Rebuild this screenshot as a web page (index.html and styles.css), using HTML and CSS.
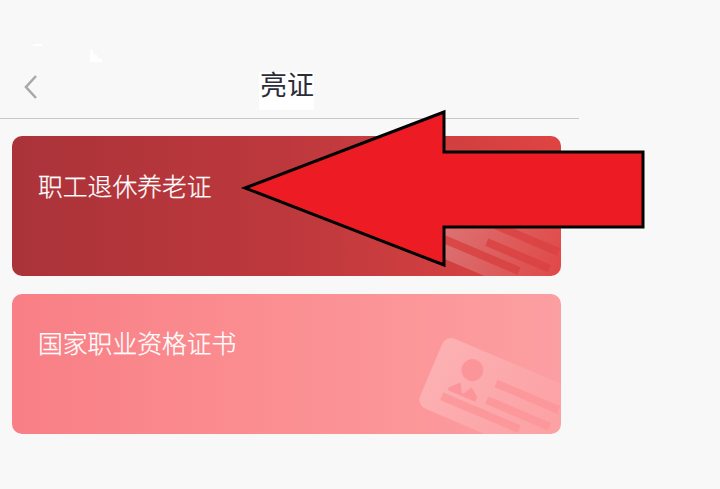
FILE: index.html
```html
<!DOCTYPE html>
<html lang="zh">
<head>
<meta charset="utf-8">
<title>亮证</title>
<link rel="stylesheet" href="styles.css">
</head>
<body>
<div class="screen">
  <i class="patch patch-a"></i>
  <i class="patch patch-b"></i>
  <i class="patch patch-c"></i>
  <header class="topbar">
    <svg class="back" viewBox="0 0 16 24" width="16" height="24"><path d="M13 1 3 12 13 23" fill="none" stroke="#a9a9a9" stroke-width="2.6"/></svg>
    <h1 class="title">亮证</h1>
  </header>
  <main class="cards">
    <section class="card card-red">
      <span class="card-label">职工退休养老证</span>
      <svg class="card-art" viewBox="0 0 549 140" width="549" height="140">
        <defs>
          <linearGradient id="plateRed" x1="0" x2="1" y1="0" y2="0"><stop offset="0" stop-color="#fff" stop-opacity=".3"/><stop offset=".8" stop-color="#fff" stop-opacity=".04"/></linearGradient>
        </defs>
        <g transform="translate(434 41) rotate(23)">
          <rect width="170" height="76" rx="10" fill="url(#plateRed)"/>
          <circle cx="38" cy="22" r="11" fill="#d44144"/>
          <rect x="65" y="21" width="68" height="8" fill="#da4242" fill-opacity=".85"/>
          <rect x="63" y="40" width="68" height="8" fill="#da4242" fill-opacity=".85"/>
          <rect x="20" y="54" width="84" height="8" fill="#d84141" fill-opacity=".85"/>
        </g>
      </svg>
    </section>
    <section class="card card-pink">
      <span class="card-label">国家职业资格证书</span>
      <svg class="card-art" viewBox="0 0 549 140" width="549" height="140">
        <defs>
          <linearGradient id="platePink" x1="0" x2="1" y1="0" y2="0"><stop offset="0" stop-color="#fff" stop-opacity=".24"/><stop offset=".85" stop-color="#fff" stop-opacity=".02"/></linearGradient>
        </defs>
        <g transform="translate(434 41) rotate(23)">
          <rect width="170" height="76" rx="10" fill="url(#platePink)"/>
          <circle cx="38" cy="22" r="11" fill="#fc9599"/>
          <path d="M23 47 32 38 37 47 39 47 44 38 53 45 53 50 23 50Z" fill="#fc9599"/>
          <rect x="65" y="21" width="68" height="8" fill="#fc9599" fill-opacity=".85"/>
          <rect x="63" y="40" width="68" height="8" fill="#fc9599" fill-opacity=".85"/>
          <rect x="20" y="54" width="84" height="8" fill="#fc9599" fill-opacity=".85"/>
        </g>
      </svg>
    </section>
  </main>
  <svg class="arrow" viewBox="0 0 720 489" width="720" height="489"><path d="M245 188 444 112V152H643V227H444V265Z" fill="#ed1c24" stroke="#000" stroke-width="3"/></svg>
</div>
</body>
</html>
```
FILE: styles.css
```css
* { box-sizing: border-box; }
html, body { margin: 0; padding: 0; }
body {
  background: #f8f8f8;
  font-family: "Noto Sans CJK SC", "Noto Sans", sans-serif;
  overflow: hidden;
}
.screen { position: relative; width: 720px; height: 489px; }
.topbar {
  position: relative;
  width: 579px;
  height: 119px;
  border-bottom: 1px solid #c8c8c8;
  display: flex;
  align-items: flex-end;
  justify-content: center;
  padding-bottom: 16px;
}
.back { position: absolute; left: 23px; top: 75px; }
.title {
  margin: 0 5px 0 0;
  font-size: 27px;
  line-height: 36px;
  font-weight: 400;
  color: #2b2e38;
}
.cards {
  width: 579px;
  padding: 17px 18px 0 12px;
  display: flex;
  flex-direction: column;
  gap: 18px;
}
.card {
  position: relative;
  height: 140px;
  border-radius: 10px;
  overflow: hidden;
  padding: 32px 26px;
}
.card-red { background: linear-gradient(90deg, #aa3339 0%, #bd383d 50%, #df4442 100%); }
.card-pink { background: linear-gradient(90deg, #f87f85 0%, #fb8f92 50%, #fc9fa2 100%); }
.card-label {
  position: relative;
  display: block;
  font-size: 24.8px;
  line-height: 34px;
  font-weight: 300;
  color: #fff;
  -webkit-text-stroke: 0.25px #fff;
}
.card-pink .card-label { top: -1px; }
.card-art { position: absolute; left: 0; top: 0; }
.arrow { position: absolute; left: 0; top: 0; }
.patch { position: absolute; background: #fff; }
.patch-a { left: 33px; top: 44px; width: 9px; height: 2px; }
.patch-b { left: 90px; top: 50px; width: 12px; height: 12px; clip-path: polygon(0 0, 25% 0, 25% 40%, 60% 40%, 60% 70%, 100% 70%, 100% 100%, 0 100%); }
.patch-c { left: 259px; top: 72px; width: 55px; height: 38px; }
```
